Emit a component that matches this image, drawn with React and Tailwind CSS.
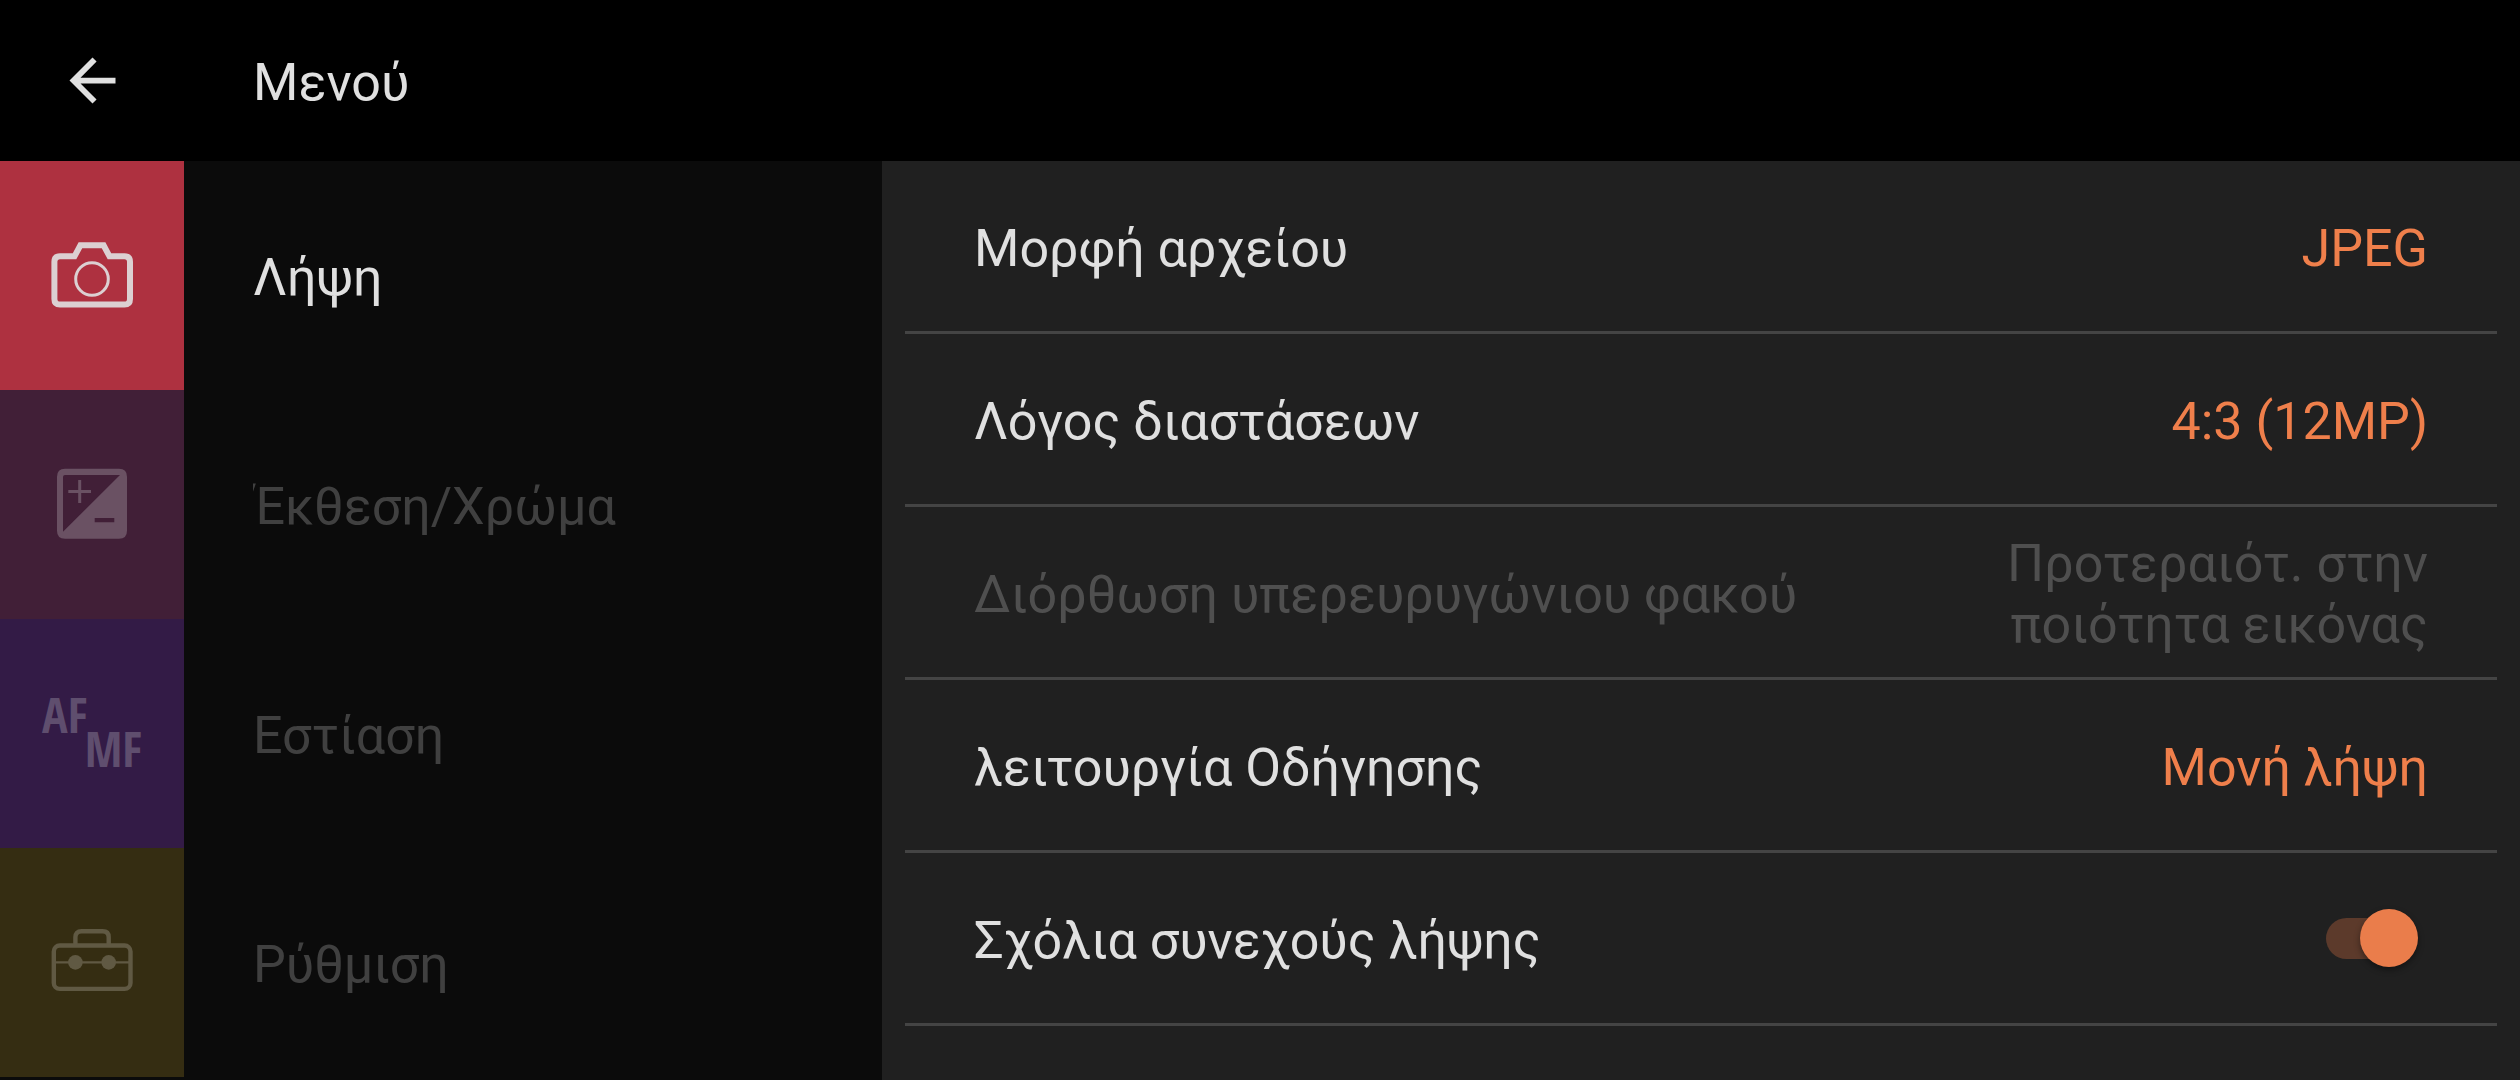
import React, { useState } from 'react';
import clsx from 'clsx';

const ArrowBackIcon = () => (
  <svg viewBox="0 0 24 24" className="w-[69px] h-[69px]" fill="currentColor" aria-hidden="true">
    <path d="M20 11H7.83l5.59-5.59L12 4l-8 8 8 8 1.41-1.41L7.83 13H20v-2z" />
  </svg>
);

const CameraIcon = () => (
  <svg viewBox="0 0 92 93" className="w-[92px] h-[93px]" fill="none" stroke="currentColor" aria-hidden="true">
    <path
      d="M14 27.3H28.5L34.4 16.3H57.6L63.5 27.3H78.5Q84 27.3 84 32.8V70Q84 75.6 78.5 75.6H14Q8.4 75.6 8.4 70V32.8Q8.4 27.3 14 27.3Z"
      strokeWidth="6"
    />
    <circle cx="46" cy="50" r="16.3" strokeWidth="3" />
  </svg>
);

const ExposureIcon = () => (
  <svg viewBox="0 0 92 93" className="w-[92px] h-[93px]" fill="currentColor" aria-hidden="true">
    <path
      fillRule="evenodd"
      d="M19 10.8H73Q81 10.8 81 18.8V72.8Q81 80.8 73 80.8H19Q11 80.8 11 72.8V18.8Q11 10.8 19 10.8ZM19 17Q17 17 17 19V73.8L74 17ZM48.7 60.1V64.2H68.3V60.1Z"
    />
    <path d="M22.3 33.4H45M33.7 22V45" fill="none" stroke="currentColor" strokeWidth="3" />
  </svg>
);

const FocusIcon = () => (
  <span className="flex flex-col w-[100px] pb-1 font-['Open_Sans_Condensed','Noto_Sans_Condensed','Roboto_Condensed',Roboto,sans-serif] text-[48px] leading-[34px] font-bold" aria-hidden="true">
    <span className="self-start">AF</span>
    <span className="self-end">MF</span>
  </span>
);

const ToolboxIcon = () => (
  <svg viewBox="0 0 92 93" className="w-[92px] h-[93px]" fill="none" stroke="currentColor" strokeWidth="4.4" aria-hidden="true">
    <rect x="7.8" y="29.5" width="76.7" height="43.4" rx="6" />
    <path d="M29.4 29V21.2Q29.4 15.2 35.4 15.2H56.7Q62.7 15.2 62.7 21.2V29" />
    <path d="M8 46.4H84" strokeWidth="2.4" />
    <circle cx="29.4" cy="46.4" r="7.3" fill="currentColor" stroke="none" />
    <circle cx="62.7" cy="46.4" r="7.3" fill="currentColor" stroke="none" />
  </svg>
);

const tabs = [
  { id: 'shooting', label: 'Λήψη', icon: CameraIcon, color: 'bg-[#ae3140] text-[#dcd0d2]' },
  { id: 'exposure', label: 'Έκθεση/Χρώμα', icon: ExposureIcon, color: 'bg-[#411f37] text-[#6a5163]' },
  { id: 'focus', label: 'Εστίαση', icon: FocusIcon, color: 'bg-[#331b46] text-[#5f4e6e]' },
  { id: 'setup', label: 'Ρύθμιση', icon: ToolboxIcon, color: 'bg-[#352d12] text-[#605943]' },
];

const settings = [
  { label: 'Μορφή αρχείου', value: 'JPEG' },
  { label: 'Λόγος διαστάσεων', value: '4:3 (12MP)' },
  { label: 'Διόρθωση υπερευρυγώνιου φακού', value: 'Προτεραιότ. στην ποιότητα εικόνας', disabled: true },
  { label: 'λειτουργία Οδήγησης', value: 'Μονή λήψη' },
];

const MenuTab = ({ tab, active, onClick }) => {
  const Icon = tab.icon;
  return (
    <button type="button" onClick={onClick} className="flex w-full h-[229px] text-left">
      <span className={clsx('flex items-center justify-center w-[184px] h-full shrink-0', tab.color)}>
        <Icon />
      </span>
      <span className="flex items-center h-full pt-1 pl-[69px]">
        <span className={clsx('overflow-hidden', active ? 'text-[#e0e0e0]' : 'text-[#404040]')}>{tab.label}</span>
      </span>
    </button>
  );
};

const SettingRow = ({ label, value, disabled }) => (
  <li className="border-b-3 border-[#444444]">
    <button
      type="button"
      disabled={disabled}
      className={clsx(
        'flex items-center justify-between w-full h-[170px] pt-1 px-[69px]',
        disabled ? 'text-[#4f4f4f]' : 'text-[#e0e0e0]'
      )}
    >
      <span className="text-left">{label}</span>
      <span className={clsx('max-w-[480px] text-right', !disabled && 'text-[#ef7f4b]')}>{value}</span>
    </button>
  </li>
);

const ToggleRow = ({ label, checked, onChange }) => (
  <li className="border-b-3 border-[#444444]">
    <label className="flex items-center justify-between h-[170px] pl-[69px] pr-[88px] text-[#e0e0e0]">
      <span className="pt-1">{label}</span>
      <input
        type="checkbox"
        role="switch"
        checked={checked}
        onChange={onChange}
        className="relative appearance-none w-[83px] h-[41px] rounded-full bg-[#444444] checked:bg-[#5c3a2b] before:absolute before:-left-[9px] before:-top-[9px] before:w-[58px] before:h-[58px] before:rounded-full before:bg-[#bdbdbd] before:shadow-[0_3px_6px_rgba(0,0,0,0.4)] checked:before:left-[34px] checked:before:bg-[#ea7d4b]"
      />
    </label>
  </li>
);

const App = () => {
  const [activeTab, setActiveTab] = useState('shooting');
  const [burstFeedback, setBurstFeedback] = useState(true);

  return (
    <div className="flex flex-col min-h-screen bg-black font-[Roboto,sans-serif] text-[52px] leading-[61px] text-[#e0e0e0]">
      {/* Header */}
      <header className="flex items-center h-[161px]">
        <button type="button" aria-label="Πίσω" className="flex items-center justify-center w-[184px] h-full">
          <ArrowBackIcon />
        </button>
        <h1 className="pt-1 pl-[69px]">Μενού</h1>
      </header>

      <div className="flex flex-1">
        {/* Categories */}
        <nav className="w-[35%] bg-[#0b0b0b]">
          {tabs.map((tab) => (
            <MenuTab
              key={tab.id}
              tab={tab}
              active={tab.id === activeTab}
              onClick={() => setActiveTab(tab.id)}
            />
          ))}
        </nav>

        {/* Settings */}
        <main className="flex-1 bg-[#202020] px-[23px]">
          <ul>
            {settings.map((setting) => (
              <SettingRow key={setting.label} {...setting} />
            ))}
            <ToggleRow
              label="Σχόλια συνεχούς λήψης"
              checked={burstFeedback}
              onChange={(e) => setBurstFeedback(e.target.checked)}
            />
          </ul>
        </main>
      </div>
    </div>
  );
};

export default App;
